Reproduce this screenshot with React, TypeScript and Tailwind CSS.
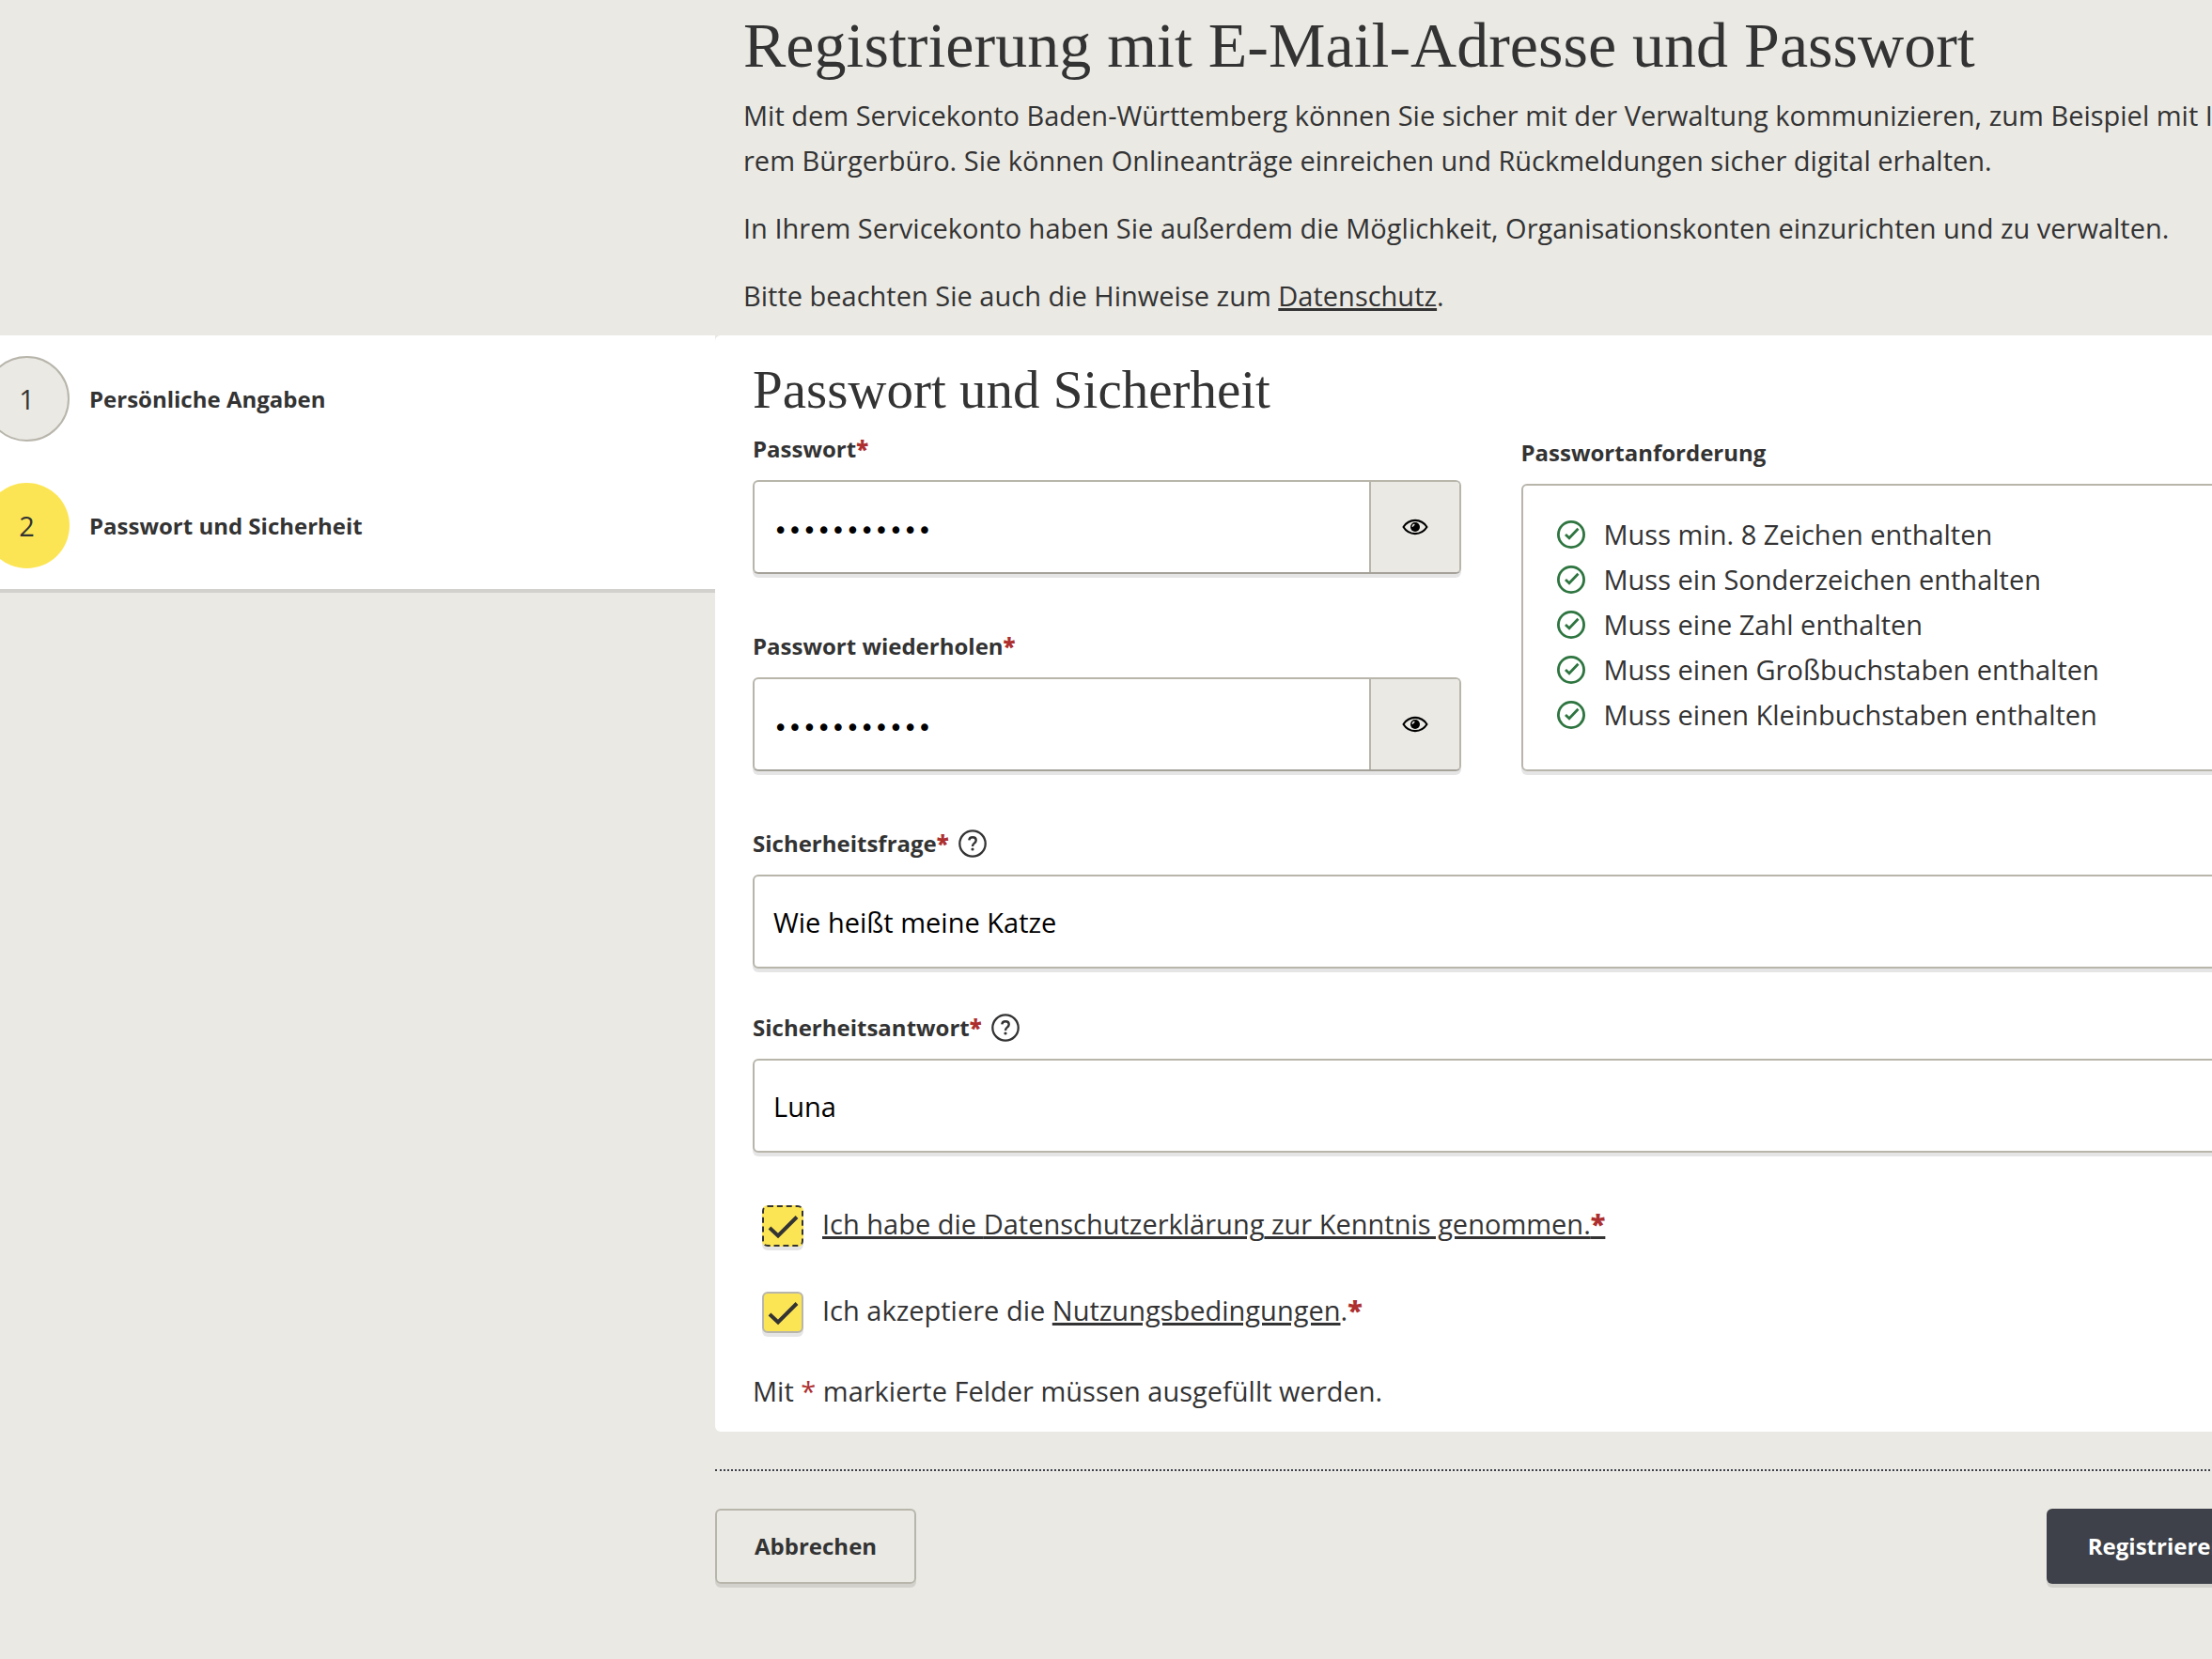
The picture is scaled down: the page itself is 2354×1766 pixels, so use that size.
import type { ReactNode } from 'react';

const fieldShadow = 'shadow-[0_4px_0_rgba(0,0,0,0.1)]';

const requirements = [
  'Muss min. 8 Zeichen enthalten',
  'Muss ein Sonderzeichen enthalten',
  'Muss eine Zahl enthalten',
  'Muss einen Großbuchstaben enthalten',
  'Muss einen Kleinbuchstaben enthalten',
];

const steps = [
  { nr: 1, title: 'Persönliche Angaben', active: false },
  { nr: 2, title: 'Passwort und Sicherheit', active: true },
];

function Required() {
  return <span className="font-extrabold text-[#ad2f2f]">*</span>;
}

function EyeIcon() {
  return (
    <svg viewBox="0 0 28 18" className="h-[18px] w-7" aria-hidden="true">
      <path
        d="M1.500 9C4.500 4.300 9 1.900 14 1.900S23.500 4.300 26.500 9C23.500 13.700 19 16.100 14 16.100S4.500 13.700 1.500 9Z"
        fill="none"
        stroke="#000"
        strokeWidth="2.100"
        strokeLinejoin="round"
      />
      <circle cx="14" cy="9" r="5" fill="#000" />
      <path d="M11.200 8.800A2.800 2.800 0 0 1 13.400 6.200" fill="none" stroke="#eae9e4" strokeWidth="1.500" />
    </svg>
  );
}

function CheckCircleIcon() {
  return (
    <svg viewBox="0 0 30 30" className="size-[30px] shrink-0" fill="none" stroke="#2e7540" aria-hidden="true">
      <circle cx="15" cy="15" r="13.600" strokeWidth="2.800" />
      <path d="M9 15l4 3.800 9.500-10" strokeWidth="2.800" />
    </svg>
  );
}

function HelpButton({ label }: { label: string }) {
  return (
    <button type="button" aria-label={label} className="size-[30px]">
      <svg viewBox="0 0 30 30" className="size-[30px]" fill="none" stroke="#333" aria-hidden="true">
        <circle cx="15" cy="15" r="13.700" strokeWidth="2.300" />
        <path
          d="M11.300 11.400C11.500 9.300 13 8.200 15 8.200c2.200 0 3.700 1.200 3.700 3.200 0 1.500-.8 2.300-1.900 3.200-1.200.9-1.800 1.600-1.800 3.400"
          strokeWidth="2.400"
        />
        <circle cx="15" cy="21" r="1.600" fill="#333" stroke="none" />
      </svg>
    </button>
  );
}

function FieldLabel({ id, children }: { id: string; children: ReactNode }) {
  return (
    <label htmlFor={id} className="text-2xl leading-8 font-bold">
      {children}
      <Required />
    </label>
  );
}

function PasswordField({ id, label }: { id: string; label: string }) {
  return (
    <div className="flex flex-col gap-[17px]">
      <FieldLabel id={id}>{label}</FieldLabel>
      <div
        className={`flex h-[100px] overflow-hidden rounded-md border-2 border-[#b8b5ab] border-b-[#a5a29a] bg-white ${fieldShadow}`}
      >
        <input
          id={id}
          type="password"
          defaultValue="Geheim!2024"
          className="min-w-0 flex-1 px-5 pt-2 font-['DejaVu_Sans',sans-serif] text-[26px] text-black outline-none"
        />
        <button
          type="button"
          aria-label="Passwort anzeigen"
          className="flex w-24 items-center justify-center border-l-2 border-[#b8b5ab] bg-[#eae9e4]"
        >
          <EyeIcon />
        </button>
      </div>
    </div>
  );
}

function TextField({ id, label, value }: { id: string; label: string; value: string }) {
  return (
    <div className="flex flex-col gap-[17px]">
      <div className="flex h-8 items-center gap-[10px]">
        <FieldLabel id={id}>{label}</FieldLabel>
        <HelpButton label={`Hilfe zu ${label}`} />
      </div>
      <input
        id={id}
        type="text"
        defaultValue={value}
        className={`h-[100px] w-full rounded-md border-2 border-[#b8b5ab] bg-white px-5 text-black ${fieldShadow}`}
      />
    </div>
  );
}

function Checkbox({ id, focused = false, children }: { id: string; focused?: boolean; children: ReactNode }) {
  return (
    <div className="flex items-end gap-5 pl-[10px]">
      <div className="grid size-11 shrink-0">
        <input
          id={id}
          type="checkbox"
          defaultChecked
          className={`col-start-1 row-start-1 size-11 appearance-none rounded-md border-2 bg-[#fce554] ${fieldShadow} ${
            focused ? 'border-dashed border-[#333]' : 'border-[#b8b5ab]'
          }`}
        />
        <svg
          viewBox="0 0 44 44"
          className="pointer-events-none col-start-1 row-start-1 size-11"
          fill="none"
          stroke="#333"
          strokeWidth="4"
          aria-hidden="true"
        >
          <path d="M8 24l9 8.500 20-20" />
        </svg>
      </div>
      <label htmlFor={id}>{children}</label>
    </div>
  );
}

function StepList() {
  return (
    <nav className="w-[761px] shrink-0">
      <ol className="border-b-4 border-[#d2d1cd] bg-white">
        {steps.map((step) => (
          <li key={step.nr} className="-ml-[17px] flex h-[135px] items-center gap-[21px]">
            <span
              className={`flex size-[91px] items-center justify-center rounded-full ${
                step.active ? 'bg-[#fce554]' : 'border-2 border-[#b8b5ab] bg-[#eae9e4]'
              }`}
            >
              {step.nr}
            </span>
            <span className="text-2xl leading-8 font-bold">{step.title}</span>
          </li>
        ))}
      </ol>
    </nav>
  );
}

const link = 'underline decoration-[3px] underline-offset-2';

export default function App() {
  return (
    <div className="min-h-screen overflow-hidden bg-[#eae9e4] font-['Open_Sans','Noto_Sans',sans-serif] text-[29px] leading-[48px] text-[#333]">
      <header className="flex flex-col pb-[18px] pl-[791px] whitespace-nowrap">
        <h1 className="pt-1 pb-[7px] font-['Liberation_Serif',serif] text-[68px] leading-[88px]">
          Registrierung mit E-Mail-Adresse und Passwort
        </h1>
        <div className="flex flex-col gap-6">
          <p>
            Mit dem Servicekonto Baden-Württemberg können Sie sicher mit der Verwaltung kommunizieren, zum Beispiel mit Ih-
            <br />
            rem Bürgerbüro. Sie können Onlineanträge einreichen und Rückmeldungen sicher digital erhalten.
          </p>
          <p>In Ihrem Servicekonto haben Sie außerdem die Möglichkeit, Organisationskonten einzurichten und zu verwalten.</p>
          <p>
            Bitte beachten Sie auch die Hinweise zum{' '}
            <a href="#datenschutz" className={link}>
              Datenschutz
            </a>
            .
          </p>
        </div>
      </header>

      <div className="-mr-[58px] flex items-start">
        <StepList />
        <form className="flex min-w-0 flex-1 flex-col">
          <section className="rounded-md bg-white px-10 pt-[22px] pb-[19px]">
            <h2 className="pb-[11px] font-['Liberation_Serif',serif] text-[57px] leading-[72px]">Passwort und Sicherheit</h2>
            <div className="grid grid-cols-2 gap-16">
              <div className="flex flex-col gap-[61px]">
                <PasswordField id="passwort" label="Passwort" />
                <PasswordField id="passwort-wiederholen" label="Passwort wiederholen" />
              </div>
              <div className="flex flex-col gap-[17px] pt-1">
                <h3 className="text-2xl leading-8 font-bold">Passwortanforderung</h3>
                <ul className={`rounded-md border-2 border-[#b8b5ab] px-9 pt-7 pb-[34px] ${fieldShadow}`}>
                  {requirements.map((text) => (
                    <li key={text} className="flex items-center gap-5">
                      <CheckCircleIcon />
                      {text}
                    </li>
                  ))}
                </ul>
              </div>
            </div>

            <div className="flex flex-col gap-[47px] pt-[61px]">
              <TextField id="sicherheitsfrage" label="Sicherheitsfrage" value="Wie heißt meine Katze" />
              <TextField id="sicherheitsantwort" label="Sicherheitsantwort" value="Luna" />
            </div>

            <div className="flex flex-col gap-11 pt-[52px] pb-[38px]">
              <Checkbox id="datenschutz-gelesen" focused>
                <span className={link}>
                  Ich habe die <a href="#datenschutz">Datenschutzerklärung</a> zur Kenntnis genommen.
                  <Required />
                </span>
              </Checkbox>
              <Checkbox id="nutzungsbedingungen-akzeptiert">
                Ich akzeptiere die{' '}
                <a href="#nutzungsbedingungen" className={link}>
                  Nutzungsbedingungen
                </a>
                .<Required />
              </Checkbox>
            </div>
            <p>
              Mit <span className="text-[#ad2f2f]">*</span> markierte Felder müssen ausgefüllt werden.
            </p>
          </section>

          <div className="mt-10 flex justify-between border-t-2 border-dotted border-[#3d4048] pt-10 text-2xl leading-8 font-bold">
            <button type="button" className={`h-20 rounded-md border-2 border-[#b8b5ab] px-10 ${fieldShadow}`}>
              Abbrechen
            </button>
            <button type="submit" className={`h-20 w-[234px] rounded-md bg-[#3e4149] text-white ${fieldShadow}`}>
              Registrieren
            </button>
          </div>
        </form>
      </div>
    </div>
  );
}
